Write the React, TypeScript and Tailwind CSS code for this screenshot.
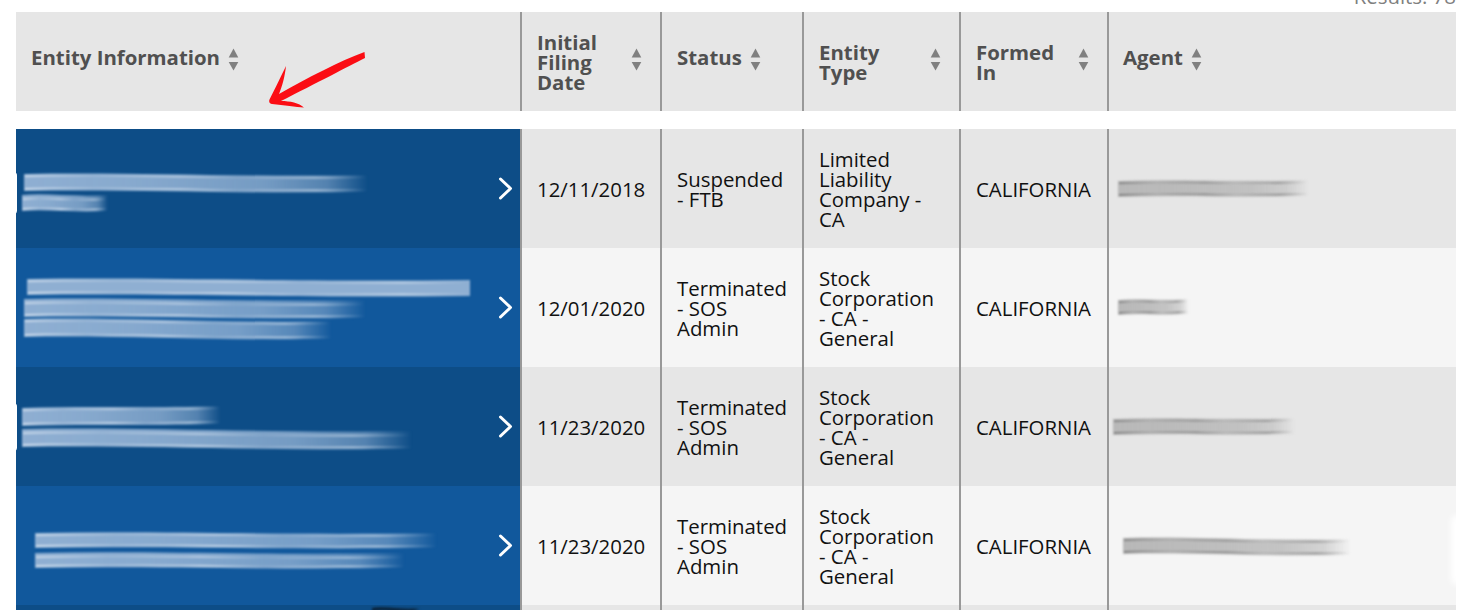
import { useId } from "react";

type Stroke = [number, number, number, number, number, boolean?];
type Tone = "light" | "dark" | "ink";

const GRID = "grid grid-cols-[506px_140px_142px_157px_148px_1fr]";

function band(x1: number, x2: number, y: number, h: number, tilt: number, wave: number) {
  const w = x2 - x1;
  return `M${x1} ${y} C${x1 + w * 0.3} ${y - wave} ${x1 + w * 0.6} ${y + tilt + wave} ${x2} ${y + tilt} L${x2} ${y + tilt + h} C${x1 + w * 0.6} ${y + tilt + h + wave} ${x1 + w * 0.3} ${y + h - wave} ${x1} ${y + h} Z`;
}

const TINTS: Record<Tone, [string, string]> = {
  light: ["#8fafd2", "#dbe6f2"],
  dark: ["#b8b8b8", "#757575"],
  ink: ["#0b2238", "#0b2238"],
};

function Smear({ strokes, width, tone }: { strokes: Stroke[]; width: number; tone: Tone }) {
  const id = useId().replace(/[^a-zA-Z0-9]/g, "");
  const [main, hi] = TINTS[tone];
  const blur = tone === "dark" ? "blur-[1.3px]" : "blur-[1px]";
  return (
    <svg width={width} height={119} viewBox={`0 0 ${width} 119`} className={`block shrink-0 ${blur}`}>
      <defs>
        <linearGradient id={`${id}m`}>
          <stop offset="0" stopColor={main} />
          <stop offset="0.3" stopColor={main} stopOpacity="0.95" />
          <stop offset="0.7" stopColor={main} stopOpacity="0.8" />
          <stop offset="0.88" stopColor={main} stopOpacity="0.55" />
          <stop offset="1" stopColor={main} stopOpacity="0" />
        </linearGradient>
        <linearGradient id={`${id}h`}>
          <stop offset="0" stopColor={hi} stopOpacity="0.9" />
          <stop offset="0.2" stopColor={hi} stopOpacity="0.25" />
          <stop offset="0.45" stopColor={hi} stopOpacity="0.7" />
          <stop offset="0.62" stopColor={hi} stopOpacity="0.15" />
          <stop offset="0.85" stopColor={hi} stopOpacity="0.7" />
          <stop offset="1" stopColor={hi} stopOpacity="0" />
        </linearGradient>
        <linearGradient id={`${id}s`}>
          <stop offset="0" stopColor={main} />
          <stop offset="1" stopColor={main} />
        </linearGradient>
      </defs>
      {strokes.map(([x1, x2, y, h, tilt, solid], i) => (
        <g key={i}>
          <path d={band(x1, x2, y, h, tilt, 2.2)} fill={`url(#${id}${solid ? "s" : "m"})`} />
          <path d={band(x1 + 1, x2 - 2, y + (i % 2 ? 3 : 1), 2.2, tilt, 2.2)} fill={`url(#${id}h)`} opacity={0.75} />
          <path d={band(x1 + 1, x2 - 1, y + h - 3, 1.8, tilt, 2.2)} fill={`url(#${id}h)`} />
        </g>
      ))}
    </svg>
  );
}

function SortIcon() {
  return (
    <svg width="11" height="23" viewBox="0 0 11 23" className="block shrink-0 -mt-1">
      <path d="M5.5 0.5 L10.3 9.5 L0.7 9.5 Z" fill="#808080" />
      <path d="M0.7 14 L10.3 14 L5.5 22.5 Z" fill="#808080" />
    </svg>
  );
}

function Chevron() {
  return (
    <svg width="15" height="23" viewBox="0 0 15 23" className="block shrink-0">
      <path d="M2.5 2 L12.5 11.5 L2.5 21" fill="none" stroke="#ffffff" strokeWidth="3" strokeLinecap="round" strokeLinejoin="round" />
    </svg>
  );
}

function HeadCell({ label, last }: { label: string; last?: boolean }) {
  const multi = label.includes("\n");
  return (
    <div className={`flex items-center pr-[18px] gap-[8px] ${last ? "pl-[14px]" : "pl-[15px] border-r-2 border-[#999999]"}`}>
      <span className={`whitespace-pre-line text-[20.4px] leading-[20px] font-bold text-[#505050] ${multi ? "flex-1" : "pb-[9px]"}`}>
        {label}
      </span>
      <SortIcon />
    </div>
  );
}

function TextCell({ text }: { text: string }) {
  return (
    <div className="flex items-center pl-[15px] border-r-2 border-[#999999]">
      <span className="whitespace-pre-line text-[20.4px] leading-[20px] text-[#111111]">{text}</span>
    </div>
  );
}

const rows: {
  date: string;
  status: string;
  type: string;
  name: Stroke[];
  agent: Stroke[];
}[] = [
  {
    date: "12/11/2018",
    status: "Suspended\n- FTB",
    type: "Limited\nLiability\nCompany -\nCA",
    name: [
      [8, 352, 45, 17, 1],
      [6, 92, 66, 16, 0],
    ],
    agent: [[9, 200, 52, 16, -1]],
  },
  {
    date: "12/01/2020",
    status: "Terminated\n- SOS\nAdmin",
    type: "Stock\nCorporation\n- CA -\nGeneral",
    name: [
      [11, 454, 31, 16, 1, true],
      [8, 350, 51, 18, 1],
      [8, 316, 71, 18, 2],
    ],
    agent: [[9, 80, 52, 15, -1]],
  },
  {
    date: "11/23/2020",
    status: "Terminated\n- SOS\nAdmin",
    type: "Stock\nCorporation\n- CA -\nGeneral",
    name: [
      [6, 205, 41, 18, -2],
      [6, 396, 62, 18, 2],
    ],
    agent: [[4, 186, 52, 16, -1]],
  },
  {
    date: "11/23/2020",
    status: "Terminated\n- SOS\nAdmin",
    type: "Stock\nCorporation\n- CA -\nGeneral",
    name: [
      [19, 421, 47, 15, 0],
      [19, 389, 67, 15, 0],
    ],
    agent: [[14, 242, 52, 16, 1]],
  },
  {
    date: "",
    status: "",
    type: "",
    name: [[356, 404, 3, 3, 0]],
    agent: [],
  },
];

export default function App() {
  return (
    <div className="relative h-[610px] w-[1476px] overflow-hidden bg-white pl-4 pr-5 font-['Open_Sans',sans-serif]">
      <div className="flex h-3 items-end justify-end overflow-hidden">
        <span className="mb-[6px] text-[20.4px] leading-[20px] text-[#808080] whitespace-nowrap">Results: 78</span>
      </div>

      <div className={`${GRID} h-[99px] bg-[#e6e6e6]`}>
        <HeadCell label="Entity Information" />
        <HeadCell label={"Initial\nFiling\nDate"} />
        <HeadCell label="Status" />
        <HeadCell label={"Entity\nType"} />
        <HeadCell label={"Formed\nIn"} />
        <HeadCell label="Agent" last />
      </div>

      <div className="mt-[18px]">
        {rows.map((r, i) => {
          const even = i % 2 === 0;
          return (
            <div key={i} className={`${GRID} h-[119px] ${even ? "bg-[#e6e6e6]" : "bg-[#f5f5f5]"}`}>
              <div className={`flex items-center justify-between pr-[7px] border-r-2 border-[#999999] ${even ? "bg-[#0d4d87]" : "bg-[#11589c]"}`}>
                <Smear strokes={r.name} width={478} tone={r.date ? "light" : "ink"} />
                {r.date && <Chevron />}
              </div>
              <TextCell text={r.date} />
              <TextCell text={r.status} />
              <TextCell text={r.type} />
              <TextCell text={r.date ? "CALIFORNIA" : ""} />
              <div className="overflow-hidden">
                <Smear strokes={r.agent} width={347} tone="dark" />
              </div>
            </div>
          );
        })}
      </div>

      <div className="absolute left-[10px] top-[172px] h-[42px] w-[6.5px] rounded-full bg-white blur-[0.5px]" />
      <div className="absolute left-[10px] top-[403px] h-[48px] w-[6.5px] rounded-full bg-white blur-[0.5px]" />
      <div className="absolute left-[1451px] top-[515px] h-[70px] w-[12px] rounded-full bg-white blur-[3px]" />

      <svg width="110" height="70" viewBox="0 0 110 70" className="absolute left-[262px] top-[45px]">
        <path
          d="M102.5 7 L103 13 C85 22 55 38 19 56 C28 56 37 58 42 62.5 C34 62 22 60 10 59 C7 58.5 6.5 56 8 53.5 C13 44 19 31 24 21 C23 31 20 42 17 49 C45 33 78 16 102.5 7 Z"
          fill="#fb0d14"
        />
      </svg>
    </div>
  );
}
